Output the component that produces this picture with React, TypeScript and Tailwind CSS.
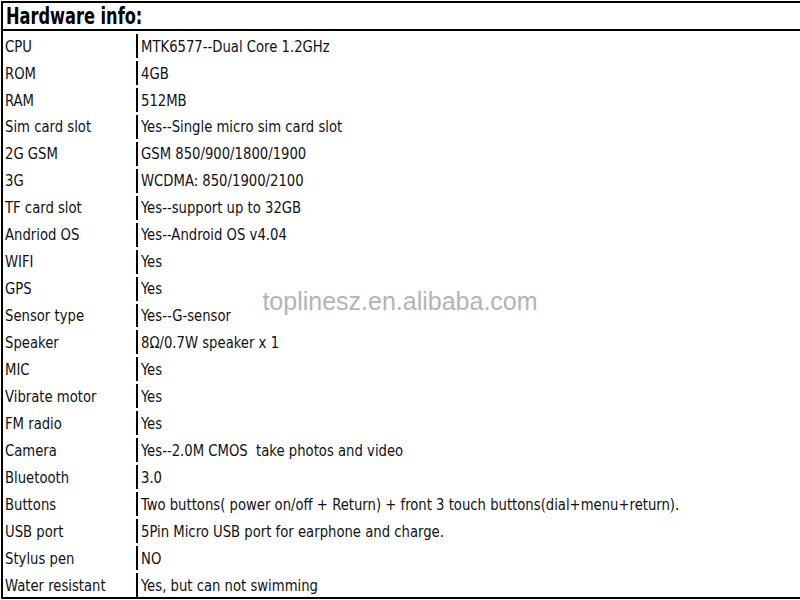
import React from "react";

const rows: [string, string][] = [
  ["CPU", "MTK6577--Dual Core 1.2GHz"],
  ["ROM", "4GB"],
  ["RAM", "512MB"],
  ["Sim card slot", "Yes--Single micro sim card slot"],
  ["2G GSM", "GSM 850/900/1800/1900"],
  ["3G", "WCDMA: 850/1900/2100"],
  ["TF card slot", "Yes--support up to 32GB"],
  ["Andriod OS", "Yes--Android OS v4.04"],
  ["WIFI", "Yes"],
  ["GPS", "Yes"],
  ["Sensor type", "Yes--G-sensor"],
  ["Speaker", "8Ω/0.7W speaker x 1"],
  ["MIC", "Yes"],
  ["Vibrate motor", "Yes"],
  ["FM radio", "Yes"],
  ["Camera", "Yes--2.0M CMOS  take photos and video"],
  ["Bluetooth", "3.0"],
  ["Buttons", "Two buttons( power on/off + Return) + front 3 touch buttons(dial+menu+return)."],
  ["USB port", "5Pin Micro USB port for earphone and charge."],
  ["Stylus pen", "NO"],
  ["Water resistant", "Yes, but can not swimming"],
];

function Txt({ children }: { children: React.ReactNode }) {
  return (
    <span className="inline-block origin-center scale-y-[1.12] whitespace-pre text-[14.7px] leading-none text-[#111]">
      {children}
    </span>
  );
}

export default function App() {
  return (
    <div className="relative h-[600px] w-[800px] overflow-hidden bg-white font-['DejaVu_Sans_Condensed','DejaVu_Sans',sans-serif]">
      <div className="ml-[1px] mt-[1px] flex h-[598px] flex-col border-b-2 border-l-2 border-t-2 border-black">
        <div className="flex h-[28px] items-center border-b-2 border-black pl-[3px]">
          <span className="inline-block scale-y-[1.25] text-[18px] font-bold leading-none text-black">
            Hardware info:
          </span>
        </div>
        <div className="flex flex-1 flex-col">
          {rows.map(([k, v]) => (
            <div key={k} className="flex flex-1 items-center pt-[3px]">
              <div className="flex h-full w-[135px] items-center border-r-2 border-black pl-[2px]">
                <Txt>{k}</Txt>
              </div>
              <div className="flex h-full flex-1 items-center pl-[3px]">
                <Txt>{v}</Txt>
              </div>
            </div>
          ))}
        </div>
      </div>
      <div className="pointer-events-none absolute left-0 top-[283px] w-full text-center font-['Liberation_Sans',sans-serif] text-[25px] text-[#b4b4b4]">
        toplinesz.en.alibaba.com
      </div>
    </div>
  );
}
